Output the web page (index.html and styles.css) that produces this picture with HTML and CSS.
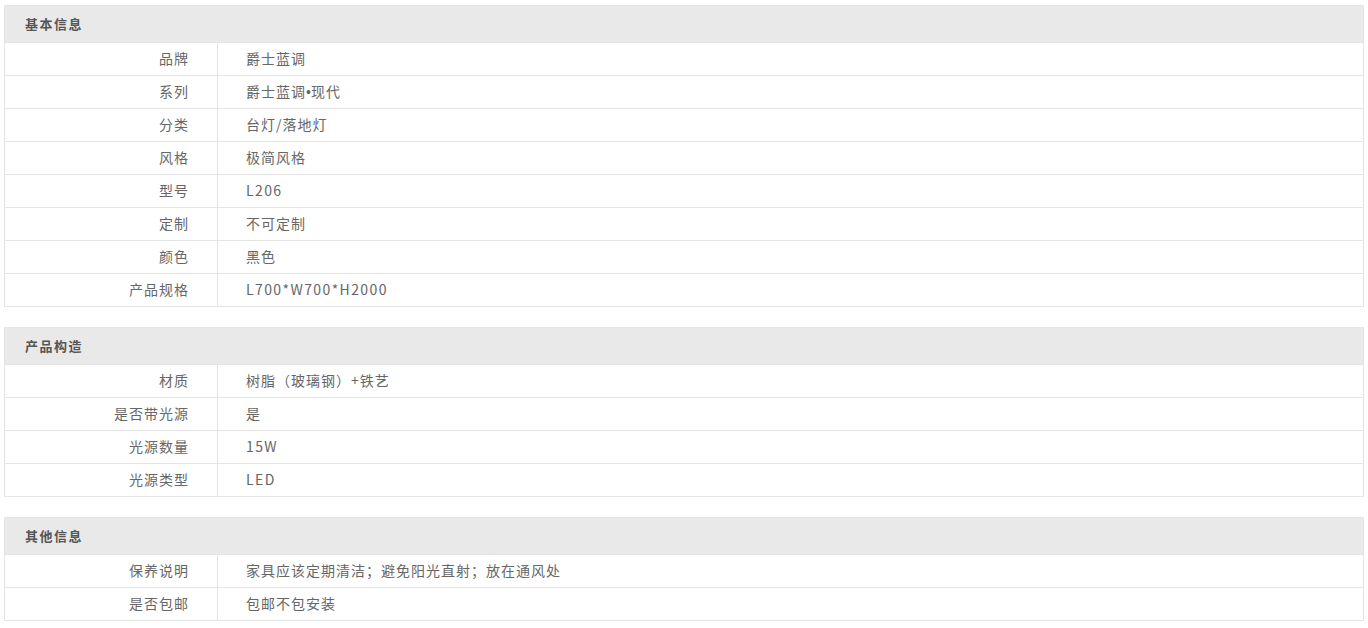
FILE: index.html
```html
<!DOCTYPE html>
<html lang="zh-CN">
<head>
<meta charset="utf-8">
<title>商品参数</title>
<link rel="stylesheet" href="styles.css">
</head>
<body>
<div class="params">
  <table class="ptable">
    <colgroup><col class="ck"><col class="cv"></colgroup>
    <thead><tr><th colspan="2">基本信息</th></tr></thead>
    <tbody>
      <tr><td class="k">品牌</td><td class="v">爵士蓝调</td></tr>
      <tr><td class="k">系列</td><td class="v">爵士蓝调<span class="dot">•</span>现代</td></tr>
      <tr><td class="k">分类</td><td class="v">台灯/落地灯</td></tr>
      <tr><td class="k">风格</td><td class="v">极简风格</td></tr>
      <tr><td class="k">型号</td><td class="v"><span class="lat">L206</span></td></tr>
      <tr><td class="k">定制</td><td class="v">不可定制</td></tr>
      <tr><td class="k">颜色</td><td class="v">黑色</td></tr>
      <tr><td class="k">产品规格</td><td class="v"><span class="lat">L700*W700*H2000</span></td></tr>
    </tbody>
  </table>
  <table class="ptable">
    <colgroup><col class="ck"><col class="cv"></colgroup>
    <thead><tr><th colspan="2">产品构造</th></tr></thead>
    <tbody>
      <tr><td class="k">材质</td><td class="v">树脂（玻璃钢）+铁艺</td></tr>
      <tr><td class="k">是否带光源</td><td class="v">是</td></tr>
      <tr><td class="k">光源数量</td><td class="v"><span class="lat">15W</span></td></tr>
      <tr><td class="k">光源类型</td><td class="v"><span class="lat">LED</span></td></tr>
    </tbody>
  </table>
  <table class="ptable">
    <colgroup><col class="ck"><col class="cv"></colgroup>
    <thead><tr><th colspan="2">其他信息</th></tr></thead>
    <tbody>
      <tr><td class="k">保养说明</td><td class="v">家具应该定期清洁；避免阳光直射；放在通风处</td></tr>
      <tr><td class="k">是否包邮</td><td class="v">包邮不包安装</td></tr>
    </tbody>
  </table>
</div>
</body>
</html>
```
FILE: styles.css
```css
html, body {
  margin: 0;
  padding: 0;
  background: #fff;
}
body {
  font-family: "Microsoft YaHei", "Noto Sans CJK SC", sans-serif;
  font-size: 14px;
  color: #666;
}
.params {
  padding: 5px 4px 0 4px;
  width: 1360px;
}
.ptable {
  width: 100%;
  border-collapse: collapse;
  margin-bottom: 20px;
  table-layout: fixed;
}
.ptable col.ck {
  width: 213px;
}
.ptable th {
  background: #e9e9e9;
  border: 1px solid #e4e4e4;
  height: 34px;
  padding: 0 0 2px 20px;
  text-align: left;
  font-weight: bold;
  color: #555;
  font-size: 13px;
  letter-spacing: 1.5px;
}
.ptable td {
  border: 1px solid #e4e4e4;
  height: 30px;
  padding: 0 0 2px 0;
  font-size: 14px;
  letter-spacing: 1px;
}
.ptable td.k {
  text-align: right;
  padding-right: 28px;
}
.ptable td.v {
  padding-left: 28px;
}
.lat {
  letter-spacing: 1.4px;
}
.dot {
  font-family: "Liberation Sans", sans-serif;
  letter-spacing: 0;
}
```
